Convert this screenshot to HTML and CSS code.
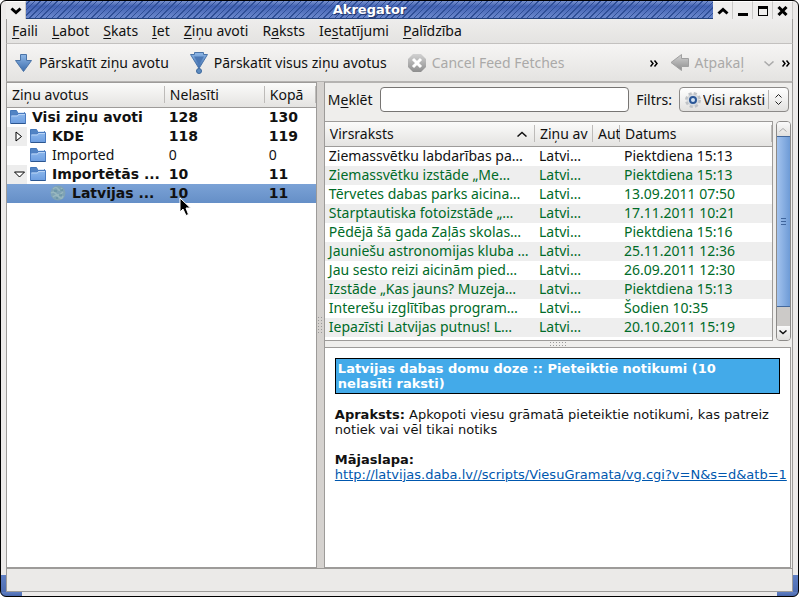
FILE: index.html
```
<!DOCTYPE html>
<html lang="lv">
<head>
  <meta charset="UTF-8">
  <meta name="viewport" content="width=device-width, initial-scale=1.0">
  <title>Akregator</title>
  <link rel="stylesheet" href="styles.css">
</head>
<body>

<svg width="0" height="0" class="defs">
  <defs>
    <linearGradient id="blue" x1="0" y1="0" x2="0" y2="1"><stop offset="0" stop-color="#8fb8e8"/><stop offset="1" stop-color="#3c6cab"/></linearGradient>
    <linearGradient id="grey" x1="0" y1="0" x2="0" y2="1"><stop offset="0" stop-color="#d2d2d2"/><stop offset="1" stop-color="#8e8e8e"/></linearGradient>
    <linearGradient id="folderFill" x1="0" y1="0" x2="0" y2="1"><stop offset="0" stop-color="#8db8ec"/><stop offset="1" stop-color="#6c9de0"/></linearGradient>
    <symbol id="folder" viewBox="0 0 16 16">
      <path d="M.5 1.500h6l1 2h7v4H.5z" fill="#5284c4" stroke="#4377ba"/>
      <path d="M8 3h6v1H8z" fill="#dce9f8"/>
      <path d="M.5 14.500V7l1-1H7l1-1.500h7.500v10z" fill="url(#folderFill)" stroke="#4a7bc0"/>
      <path d="M1.500 7H7.500l1-1.500H15" fill="none" stroke="#b9d4f5"/>
      <path d="M1 14.500h14.500" stroke="#2c568f"/>
    </symbol>
  </defs>
</svg>

<div class="window">
  <header class="titlebar">
    <button class="win-btn" aria-label="Izvēlne"><svg width="12" height="8" viewBox="0 0 12 8"><path d="M1.500 1.500 6 5.500l4.500-4" fill="none" stroke="#000" stroke-width="3"/></svg></button>
    <h1>Akregator</h1>
    <div class="win-buttons">
      <button class="win-btn" aria-label="Satīt"><svg width="12" height="8" viewBox="0 0 12 8"><path d="M1.500 6.500 6 2.500l4.500 4" fill="none" stroke="#000" stroke-width="3"/></svg></button>
      <button class="win-btn" aria-label="Minimizēt"><svg width="10" height="10" viewBox="0 0 10 10"><path d="M0 7h10v3H0z"/></svg></button>
      <button class="win-btn" aria-label="Maksimizēt"><svg width="10" height="10" viewBox="0 0 10 10"><rect x=".5" y=".5" width="9" height="9" fill="none" stroke="#000"/><path d="M0 0h10v3H0z"/></svg></button>
      <button class="win-btn" aria-label="Aizvērt"><svg width="11" height="10" viewBox="0 0 11 10"><path d="m1.500 1 8 8M9.500 1l-8 8" stroke="#000" stroke-width="3"/></svg></button>
    </div>
  </header>

  <nav class="menubar">
    <button><u>F</u>aili</button>
    <button><u>L</u>abot</button>
    <button><u>S</u>kats</button>
    <button><u>I</u>et</button>
    <button><u>Z</u>iņu avoti</button>
    <button>R<u>a</u>ksts</button>
    <button>Ie<u>s</u>tatījumi</button>
    <button><u>P</u>alīdzība</button>
  </nav>

  <div class="toolbar">
    <button class="tool">
      <svg width="20" height="20" viewBox="0 0 20 20"><path d="M6.500 1.500h6v6h5L9.500 18.500 1.500 7.500h5z" fill="url(#blue)" stroke="#4a74a8"/></svg>
      Pārskatīt ziņu avotu
    </button>
    <button class="tool">
      <svg width="20" height="22" viewBox="0 0 20 22"><path d="M5.500.5h9v2h4L10 16.500 1.500 2.500h4z" fill="url(#blue)" stroke="#4a74a8"/><path d="M5 4.500h10L10 13z" fill="#4b78b5"/><circle cx="10" cy="19" r="2.500" fill="#5e8cc0" stroke="#3d689d"/></svg>
      Pārskatīt visus ziņu avotus
    </button>
    <button class="tool" disabled>
      <svg width="20" height="20" viewBox="0 0 20 20"><path d="M6 1h8l5 5v8l-5 5H6l-5-5V6z" fill="url(#grey)"/><path d="m6 6 8 8M14 6l-8 8" stroke="#fff" stroke-width="3"/></svg>
      Cancel Feed Fetches
    </button>
    <div class="nav-tools">
      <button class="more" aria-label="Vairāk"><svg width="8" height="7" viewBox="0 0 8 7"><path d="m.5.5 2.500 3-2.500 3M4.500.5l2.500 3-2.500 3" fill="none" stroke="#000" stroke-width="1.500"/></svg></button>
      <button class="tool" disabled>
        <svg width="20" height="20" viewBox="0 0 20 20"><path d="M11.500 1.500v4h7v8h-7v4L1 9.500z" fill="url(#grey)" stroke="#a0a0a0"/></svg>
        Atpakaļ
      </button>
      <button class="more drop" aria-label="Vēsture" disabled><svg width="10" height="6" viewBox="0 0 10 6"><path d="m.5.5 4.500 4 4.500-4" fill="none" stroke="#aaa" stroke-width="1.500"/></svg></button>
      <button class="more" aria-label="Vairāk"><svg width="8" height="7" viewBox="0 0 8 7"><path d="m.5.5 2.500 3-2.500 3M4.500.5l2.500 3-2.500 3" fill="none" stroke="#000" stroke-width="1.500"/></svg></button>
    </div>
  </div>

  <main class="panes">
    <section class="feeds">
      <table>
        <colgroup><col><col class="col-unread"><col class="col-total"></colgroup>
        <thead>
          <tr><th>Ziņu avotus</th><th>Nelasīti</th><th>Kopā</th></tr>
        </thead>
        <tbody>
          <tr class="unread"><td><div class="node"><svg class="folder"><use href="#folder"/></svg><span>Visi ziņu avoti</span></div></td><td>128</td><td>130</td></tr>
          <tr class="unread"><td><div class="node"><span class="branch"><svg width="8" height="11" viewBox="0 0 8 11"><path d="m1 1 5.500 4.500L1 10z" fill="#fff" stroke="#000"/></svg></span><svg class="folder"><use href="#folder"/></svg><span>KDE</span></div></td><td>118</td><td>119</td></tr>
          <tr><td><div class="node"><span class="indent"></span><svg class="folder"><use href="#folder"/></svg><span>Imported</span></div></td><td>0</td><td>0</td></tr>
          <tr class="unread"><td><div class="node"><span class="branch"><svg width="11" height="7" viewBox="0 0 11 7"><path d="M.5 1h10l-5 5z" fill="#fff" stroke="#000"/></svg></span><svg class="folder"><use href="#folder"/></svg><span>Importētās ...</span></div></td><td>10</td><td>11</td></tr>
          <tr class="unread selected"><td><div class="node"><span class="indent"></span><span class="indent"></span><svg class="folder" viewBox="0 0 16 16"><circle cx="8" cy="8" r="7.500" fill="#7fa3b5"/><path d="M3 4q3-3 5 0t4-1M1 8q3-2 5 1t7-2M3 12q3-3 6 0t4-1" fill="none" stroke="#98b8bf" stroke-width="1.500"/><path d="M4 6h3M9 10h3M6 13h2M10 5h3" stroke="#5f8c9c"/></svg><span>Latvijas ...</span></div></td><td>10</td><td>11</td></tr>
        </tbody>
      </table>
      <svg class="cursor" width="13" height="20" viewBox="0 0 13 20"><path d="M1 1v14l3-3 3 6.500 2.500-1L7 11h4.500z" fill="#000" stroke="#fff"/></svg>
    </section>

    <div class="splitter"><i class="grip"></i></div>

    <section class="reader">
      <form class="searchbar">
        <label for="search">M<u>e</u>klēt</label>
        <input type="text" id="search">
        <label for="filter">Filtrs:</label>
        <div class="combo">
          <svg width="16" height="16" viewBox="0 0 16 16"><circle cx="8" cy="8" r="6.500" fill="#d8dadd" stroke="#bfc2c6" stroke-width="3" stroke-dasharray="3 2.100"/><circle cx="8" cy="8" r="5.500" fill="#d9dde2"/><circle cx="8" cy="8" r="3" fill="#d4e4f5" stroke="#2b5797" stroke-width="2"/></svg>
          <select id="filter"><option>Visi raksti</option></select>
          <svg class="updown" width="7" height="11" viewBox="0 0 7 11"><path d="m.5 3.500 3-3 3 3M.5 7.500l3 3 3-3" fill="none" stroke="#222"/></svg>
        </div>
      </form>

      <div class="list-area">
        <div class="articles">
          <table>
            <colgroup><col><col class="col-feed"><col class="col-author"><col class="col-date"></colgroup>
            <thead>
              <tr>
                <th class="sorted"><div>Virsraksts<svg width="10" height="6" viewBox="0 0 10 6"><path d="m.5 5.500 4.500-4 4.500 4" fill="none" stroke="#111" stroke-width="1.500"/></svg></div></th>
                <th>Ziņu av</th><th>Aut</th><th>Datums</th>
              </tr>
            </thead>
            <tbody>
              <tr class="read"><td>Ziemassvētku labdarības pa…</td><td>Latvi…</td><td></td><td>Piektdiena 15:13</td></tr>
              <tr><td>Ziemassvētku izstāde „Me…</td><td>Latvi…</td><td></td><td>Piektdiena 15:13</td></tr>
              <tr><td>Tērvetes dabas parks aicina…</td><td>Latvi…</td><td></td><td>13.09.2011 07:50</td></tr>
              <tr><td>Starptautiska fotoizstāde „…</td><td>Latvi…</td><td></td><td>17.11.2011 10:21</td></tr>
              <tr><td>Pēdējā šā gada Zaļās skolas…</td><td>Latvi…</td><td></td><td>Piektdiena 15:16</td></tr>
              <tr><td>Jauniešu astronomijas kluba …</td><td>Latvi…</td><td></td><td>25.11.2011 12:36</td></tr>
              <tr><td>Jau sesto reizi aicinām pied…</td><td>Latvi…</td><td></td><td>26.09.2011 12:30</td></tr>
              <tr><td>Izstāde „Kas jauns? Muzeja…</td><td>Latvi…</td><td></td><td>Piektdiena 15:13</td></tr>
              <tr><td>Interešu izglītības program…</td><td>Latvi…</td><td></td><td>Šodien 10:35</td></tr>
              <tr><td>Iepazīsti Latvijas putnus! L…</td><td>Latvi…</td><td></td><td>20.10.2011 15:19</td></tr>
            </tbody>
          </table>
        </div>
        <div class="scrollbar">
          <button aria-label="Augšup" disabled><svg width="8" height="5" viewBox="0 0 8 5"><path d="m.5 4.500 3.500-3 3.500 3" fill="none" stroke="#aaa"/></svg></button>
          <div class="thumb"><i></i></div>
          <div class="track"></div>
          <button aria-label="Lejup"><svg width="8" height="5" viewBox="0 0 8 5"><path d="m.5.5 3.500 3 3.500-3" fill="none" stroke="#111" stroke-width="1.500"/></svg></button>
        </div>
      </div>

      <div class="hsplitter"><i class="grip"></i></div>

      <article class="viewer">
        <h2>Latvijas dabas domu doze :: Pieteiktie notikumi (10 nelasīti raksti)</h2>
        <p><b>Apraksts:</b> Apkopoti viesu grāmatā pieteiktie notikumi, kas patreiz notiek vai vēl tikai notiks</p>
        <p><b>Mājaslapa:</b><br><a href="http://latvijas.daba.lv//scripts/ViesuGramata/vg.cgi?v=N&amp;s=d&amp;atb=1">http://latvijas.daba.lv//scripts/ViesuGramata/vg.cgi?v=N&amp;s=d&amp;atb=1</a></p>
      </article>
    </section>
  </main>

  <footer class="statusbar"></footer>
</div>

</body>
</html>
```
FILE: styles.css
```
* {
  box-sizing: border-box;
}
body {
  margin: 0;
  background: #fff;
  color: #111;
  font-family: "Noto Sans", "Open Sans", sans-serif;
  font-size: 14px;
  line-height: 18px;
}
button, input, select {
  font: inherit;
  color: inherit;
  margin: 0;
  padding: 0;
}
button {
  background: none;
  border: none;
  white-space: nowrap;
}
u {
  text-underline-offset: 2px;
}
svg {
  display: block;
  flex: none;
}
.defs {
  position: absolute;
}

.window {
  height: 100vh;
  min-height: 480px;
  display: flex;
  flex-direction: column;
  border: 1px solid #000;
  border-radius: 6px;
  overflow: hidden;
  padding: 0 5px 4px;
  background:
    linear-gradient(#5f7fc4, #4a68ac) left bottom / 21px 4px no-repeat,
    linear-gradient(#5f7fc4, #4a68ac) right bottom / 21px 4px no-repeat,
    linear-gradient(#5f7fc4, #4a68ac) left bottom / 5px 21px no-repeat,
    linear-gradient(#5f7fc4, #4a68ac) right bottom / 5px 21px no-repeat,
    #eceae9;
}

.titlebar {
  flex: none;
  height: 18px;
  display: flex;
  background:
    repeating-linear-gradient(135deg, #2f4f97 0 1px, transparent 1px 4px),
    linear-gradient(#7c94cf, #4262b4 30%, #6683c9 90%);
  border-bottom: 1px solid #23427c;
}
.titlebar h1 {
  flex: 1;
  margin: 0;
  font: bold 13px/17px "DejaVu Sans", sans-serif;
  color: #fff;
  text-align: center;
  text-shadow: 1px 1px 1px #1b2f66;
}
.win-buttons {
  display: flex;
}
.win-btn {
  width: 20px;
  height: 18px;
  display: flex;
  align-items: center;
  justify-content: center;
  background: #efeeed;
  border-right: 1px solid #c9c8c6;
  border-top: 1px solid #fff;
}

.menubar {
  flex: none;
  height: 25px;
  display: flex;
  align-items: center;
  gap: 14px;
  padding: 0 5px;
  background: linear-gradient(#eeedec, #e4e3e1);
  border: 1px solid #9d9b99;
  border-width: 0 1px 1px;
  border-bottom-color: #c3c1bf;
}

.toolbar {
  flex: none;
  height: 38px;
  display: flex;
  align-items: center;
  gap: 20px;
  padding: 0 2px 0 7px;
  background: linear-gradient(#f6f5f4, #e4e3e1);
  border: 1px solid #9d9b99;
  border-width: 0 1px 1px;
  border-bottom-color: #b5b3b1;
}
.tool {
  display: flex;
  align-items: center;
  gap: 5px;
}
.tool:disabled {
  color: #aaa9a8;
}
.nav-tools {
  display: flex;
  align-items: center;
  gap: 12px;
  margin-left: auto;
}
.more {
  padding-top: 2px;
}
.drop {
  margin-left: 8px;
  margin-right: -4px;
}

.panes {
  flex: 1;
  min-height: 0;
  display: grid;
  grid-template-columns: 65fr 8px 98fr;
  background: #efeeec;
  border: 1px solid #9d9b99;
  border-width: 0 1px;
}
table {
  width: 100%;
  table-layout: fixed;
  border-collapse: collapse;
}
th, td {
  padding: 0 4px;
  text-align: left;
  white-space: nowrap;
  overflow: hidden;
}
th {
  height: 24px;
  padding: 0 0 0 5px;
  font-weight: normal;
  background:
    linear-gradient(#bdbbb9, #bdbbb9) right center / 1px 17px no-repeat,
    linear-gradient(#fbfbfa, #e4e3e1);
  border-bottom: 1px solid #9d9b99;
}
td {
  height: 19px;
  padding-bottom: 1px;
}

.feeds {
  position: relative;
  background: #fff;
  border: 1px solid #9d9b99;
  border-width: 1px 1px 1px 0;
}
.col-unread {
  width: 100px;
}
.col-total {
  width: 51px;
}
.feeds td:first-child {
  padding: 0;
}
.node {
  display: flex;
  align-items: center;
  height: 19px;
}
.node > span:last-child {
  padding: 0 0 1px 3px;
}
.folder {
  width: 16px;
  height: 16px;
  margin: 0 3px;
}
.indent, .branch {
  flex: none;
  width: 20px;
  height: 19px;
}
.branch {
  display: flex;
  align-items: center;
  justify-content: center;
  padding-left: 4px;
  background: #ededed;
}
.unread {
  font-family: "DejaVu Sans", sans-serif;
  font-weight: bold;
}
.selected {
  background: linear-gradient(#7ba2d6, #658fc7);
}
.cursor {
  position: absolute;
  left: 172px;
  top: 114px;
}

.splitter {
  display: flex;
  align-items: center;
  justify-content: center;
  background: #d5d2cf;
  border-right: 1px solid #9d9b99;
}
.grip {
  width: 18px;
  height: 6px;
  background: radial-gradient(circle, #999 1px, transparent 1px) 0 0 / 3px 3px;
}
.splitter .grip {
  width: 6px;
  height: 18px;
}

.reader {
  display: flex;
  flex-direction: column;
  min-width: 0;
}
.searchbar {
  flex: none;
  height: 39px;
  display: flex;
  align-items: center;
  gap: 7px;
  padding: 0 3px 5px;
  border-top: 1px solid #b5b3b1;
}
.searchbar input {
  flex: 1;
  min-width: 0;
  height: 25px;
  background: #fff;
  border: 1px solid #777573;
  border-radius: 4px;
}
.combo {
  width: 110px;
  height: 25px;
  display: flex;
  align-items: center;
  padding: 0 6px 0 5px;
  background: linear-gradient(#fff, #e2e1df);
  border: 1px solid #8c8a88;
  border-radius: 4px;
}
.combo select {
  flex: 1;
  min-width: 0;
  height: 19px;
  padding: 0 0 0 2px;
  appearance: none;
  background: none;
  border: none;
  border-right: 1px solid #b5b3b1;
}
.updown {
  margin-left: 6px;
}

.list-area {
  flex: none;
  display: flex;
  gap: 3px;
  padding-right: 1px;
}
.articles {
  flex: 1;
  min-width: 0;
  background: #fff;
  border: 1px solid #9d9b99;
  border-left-width: 0;
  padding-bottom: 3px;
  color: #006b28;
}
.articles th {
  color: #111;
}
.articles tbody tr:nth-child(even) {
  background: #eee;
}
.sorted div {
  display: flex;
  align-items: center;
  justify-content: space-between;
  padding-right: 8px;
}
.col-feed {
  width: 58px;
}
.col-author {
  width: 27px;
}
.col-date {
  width: 152px;
}
.articles .read {
  color: #111;
}

.scrollbar {
  width: 15px;
  display: flex;
  flex-direction: column;
  border: 1px solid #8c8a88;
  border-radius: 4px;
  overflow: hidden;
}
.scrollbar button {
  flex: none;
  height: 14px;
  display: flex;
  align-items: center;
  justify-content: center;
  background: linear-gradient(#fafafa, #e0dfdd);
}
.thumb {
  flex: 1;
  display: flex;
  align-items: center;
  justify-content: center;
  background: linear-gradient(90deg, #a3c3ee, #6e9bd6);
  border: 1px solid #44699c;
  border-width: 1px 0;
}
.thumb i {
  width: 5px;
  height: 7px;
  background: repeating-linear-gradient(#3f659c 0 1px, transparent 1px 3px);
}
.track {
  height: 19px;
  background: #cccac8;
}

.hsplitter {
  flex: none;
  height: 6px;
  display: flex;
  align-items: center;
  justify-content: center;
}
.viewer {
  flex: 1;
  min-height: 0;
  overflow: hidden;
  padding: 10px;
  background: #fff;
  border: 1px solid #9d9b99;
  border-left-width: 0;
  margin-right: 1px;
  font: 13px/15px "DejaVu Sans", sans-serif;
}
.viewer h2 {
  margin: 0 0 13px;
  padding: 2px 12px 2px 2px;
  background: #43aae9;
  border: 1px solid #000;
  color: #fff;
  font-size: 13px;
  line-height: 15px;
}
.viewer p {
  margin: 0 0 15px;
}
.viewer a {
  color: #0057ae;
  white-space: nowrap;
}

.statusbar {
  flex: none;
  height: 24px;
  background: #ebeae8;
  border: 1px solid #9d9b99;
}
```
